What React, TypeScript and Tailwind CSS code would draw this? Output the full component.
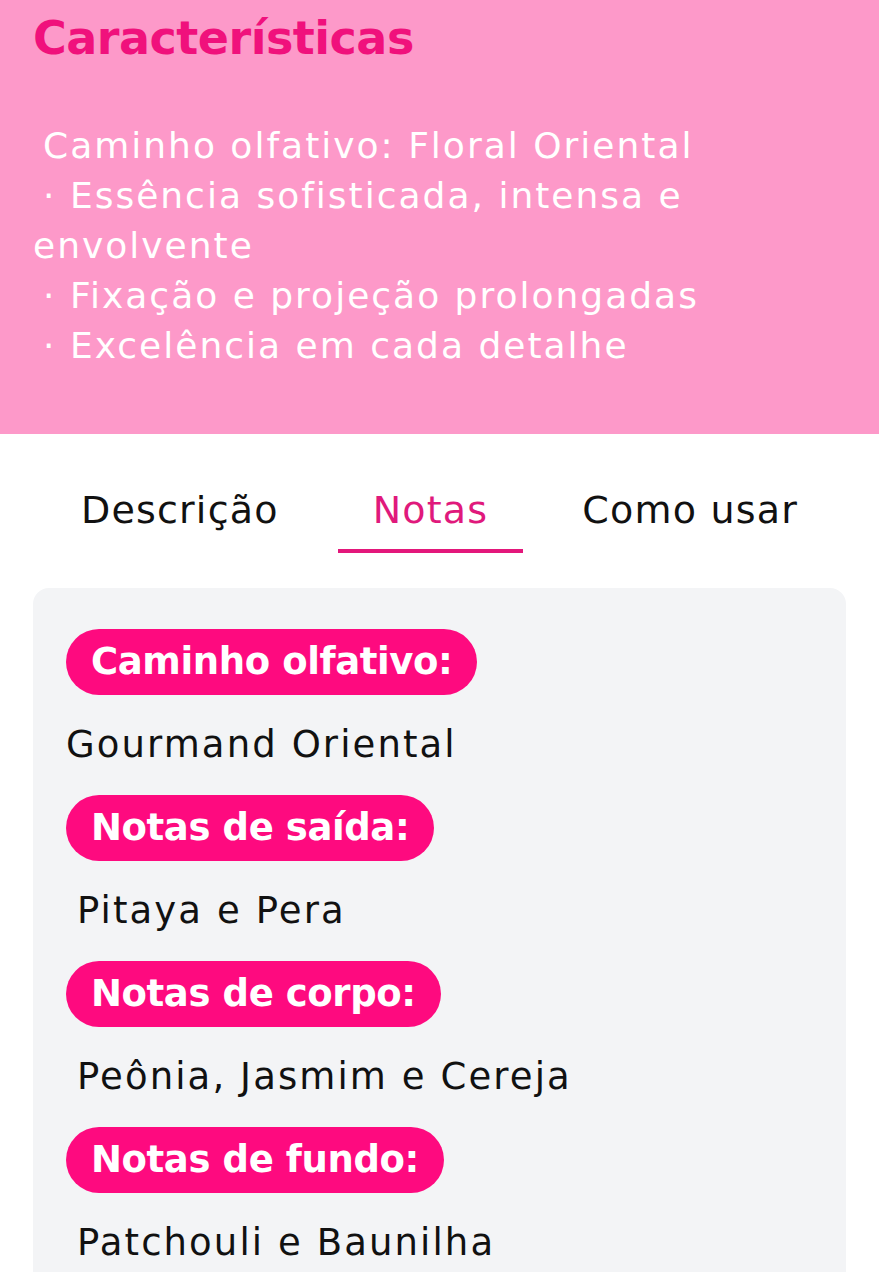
import React from 'react';

const notes = [
  { label: 'Caminho olfativo:', value: 'Gourmand Oriental', indent: false },
  { label: 'Notas de saída:', value: 'Pitaya e Pera', indent: true },
  { label: 'Notas de corpo:', value: 'Peônia, Jasmim e Cereja', indent: true },
  { label: 'Notas de fundo:', value: 'Patchouli e Baunilha', indent: true },
];

const tabs = ['Descrição', 'Notas', 'Como usar'];

export default function App() {
  return (
    <div className="w-[879px] h-[1280px] bg-white overflow-hidden font-['DejaVu_Sans',sans-serif]">
      {/* Características */}
      <section className="h-[434px] bg-[#fd99c9] px-[33px] pt-[8px]">
        <h2 className="text-[46px] leading-[60px] font-semibold text-[#f0117c] tracking-[-0.5px]">
          Características
        </h2>
        <div className="mt-[53px] text-[36px] leading-[50px] text-white tracking-[2px]">
          <p className="pl-[10px]">Caminho olfativo: Floral Oriental</p>
          <p>
            <span className="pl-[10px]">· Essência sofisticada, intensa e</span>
            <br />
            envolvente
          </p>
          <p className="pl-[10px]">· Fixação e projeção prolongadas</p>
          <p className="pl-[10px]">· Excelência em cada detalhe</p>
        </div>
      </section>

      {/* Tabs */}
      <nav className="flex justify-center gap-[24px] pt-[50px]">
        {tabs.map((t) => {
          const active = t === 'Notas';
          return (
            <div key={t} className="flex flex-col items-center">
              <span
                className={`text-[38px] leading-[52px] px-[35px] tracking-[1.2px] ${
                  active ? 'text-[#e0197c]' : 'text-[#111]'
                }`}
              >
                {t}
              </span>
              <div className={`mt-[13px] h-[4px] self-stretch ${active ? 'bg-[#e3177b]' : 'bg-transparent'}`} />
            </div>
          );
        })}
      </nav>

      {/* Notas */}
      <div className="mx-[33px] mt-[35px] bg-[#f3f4f6] rounded-t-[16px] px-[33px] pt-[41px] h-[684px]">
        {notes.map((n) => (
          <div key={n.label}>
            <span className="inline-flex items-center h-[66px] px-[25px] rounded-full bg-[#fe0a7f] text-white text-[37px] font-bold tracking-[-0.4px]">
              {n.label}
            </span>
            <div
              className={`h-[100px] flex items-center text-[37px] tracking-[2.1px] text-[#111] ${
                n.indent ? 'pl-[11px]' : ''
              }`}
            >
              {n.value}
            </div>
          </div>
        ))}
      </div>
    </div>
  );
}
